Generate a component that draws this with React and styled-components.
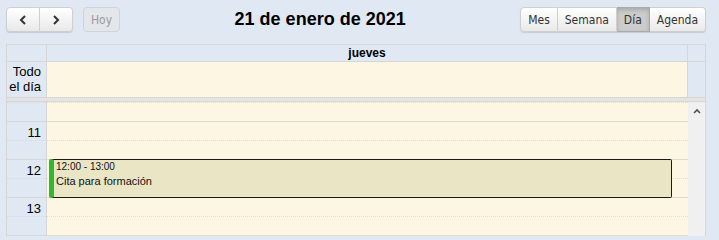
import React from 'react';
import styled, { createGlobalStyle } from 'styled-components';

const GlobalStyle = createGlobalStyle`
  html, body { margin: 0; padding: 0; background: #dfe8f3; }
  body { font-family: "Liberation Sans", Arial, sans-serif; color: #000; }
`;

const Page = styled.div`
  padding: 7px 13px 0 6px;
  height: 236px;
  box-sizing: border-box;
  overflow: hidden;
`;

const Toolbar = styled.div`
  display: flex;
  align-items: center;
  justify-content: space-between;
  height: 25px;
  margin-bottom: 12px;
`;

const Group = styled.div`
  display: flex;
  align-items: center;
  gap: ${p => p.$gap || 0}px;
`;

const ButtonSet = styled.div`
  display: flex;
  border-radius: 4px;
  box-shadow: 0 1px 1px rgba(0, 0, 0, 0.12);
`;

const Btn = styled.button`
  height: 25px;
  padding: 0 ${p => p.$pad || 7}px;
  margin: 0;
  font-family: "DejaVu Sans Condensed", "Liberation Sans", sans-serif;
  font-size: 12px;
  color: #333;
  border: 1px solid #cfcfcf;
  border-left-width: ${p => (p.$first ? 1 : 0)}px;
  background: linear-gradient(#ffffff, #e9e9e9);
  display: flex;
  align-items: center;
  justify-content: center;
  &:first-child { border-radius: 4px 0 0 4px; }
  &:last-child { border-radius: 0 4px 4px 0; }
  &.active {
    background: #cccccc;
    border-color: #aaaaaa;
    box-shadow: inset 0 2px 4px rgba(0, 0, 0, 0.18);
  }
`;

const Disabled = styled(Btn)`
  border-radius: 4px;
  border: 1px solid #d3d3d3;
  background: #e3e7ec;
  color: #9a9a9a;
  &:first-child, &:last-child { border-radius: 4px; }
`;

const Title = styled.h2`
  margin: 0;
  font-size: 18px;
  font-weight: bold;
  font-family: "Liberation Sans", Arial, sans-serif;
`;

const Table = styled.div`
  border: 1px solid #d6d6d6;
  border-bottom: none;
  width: 700px;
  box-sizing: border-box;
`;

const Row = styled.div`
  display: grid;
  grid-template-columns: 40px 1fr 17px;
  height: ${p => p.$h}px;
  border-bottom: 1px solid #d6d6d6;
`;

const Axis = styled.div`
  background: #dfe8f3;
  border-right: 1px solid #d6d6d6;
  text-align: right;
  padding: 2px 5px 0 0;
  font-size: 13px;
  line-height: 15px;
  box-sizing: border-box;
`;

const DayHead = styled.div`
  text-align: center;
  font-size: 12px;
  font-weight: bold;
  line-height: 16px;
  border-right: 1px solid #d6d6d6;
`;

const Cream = styled.div`
  background: #fdf6e3;
  border-right: 1px solid #d6d6d6;
`;

const Gutter = styled.div`
  background: #dfe8f3;
`;

const Divider = styled.div`
  height: 3px;
  background: #e4e4e4;
  border-bottom: 1px solid #d6d6d6;
`;

const Scroller = styled.div`
  display: grid;
  grid-template-columns: 40px 1fr 17px;
  height: 140px;
  overflow: hidden;
`;

const AxisCol = styled.div`
  background: #dfe8f3;
  border-right: 1px solid #d6d6d6;
`;

const DayCol = styled.div`
  position: relative;
  background: #fdf6e3;
`;

const Slot = styled.div`
  height: 19px;
  box-sizing: border-box;
  border-top: 1px ${p => (p.$half ? 'dotted #e2ddcd' : 'solid #dedbd2')};
  text-align: right;
  padding-right: 5px;
  font-size: 13px;
  line-height: 15px;
  padding-top: 3px;
`;

const AxisSlot = styled(Slot)`
  border-top-color: ${p => (p.$half ? '#d3dbe4' : '#d6d6d6')};
`;

const ScrollBar = styled.div`
  background: #f0f0f0;
  display: flex;
  justify-content: center;
  padding-top: 6px;
`;

const Event = styled.div`
  position: absolute;
  left: 2px;
  right: 16px;
  top: ${p => p.$top}px;
  height: ${p => p.$h}px;
  box-sizing: border-box;
  background: #e9e5c5;
  border: 1px solid #1a1a1a;
  border-left: 5px solid #2dbb2d;
  border-radius: 2px;
  padding: 1px 2px;
  font-family: "Liberation Sans", Arial, sans-serif;
  color: #111;
`;

const EventTime = styled.div`
  font-size: 10px;
  line-height: 12px;
`;

const EventTitle = styled.div`
  font-size: 11px;
  line-height: 14px;
  margin-top: 1px;
`;

const Chevron = ({ dir }) => (
  <svg width="10" height="12" viewBox="0 0 10 12">
    <polyline
      points={dir === 'left' ? '7,2 3,6 7,10' : '3,2 7,6 3,10'}
      fill="none"
      stroke="#333"
      strokeWidth="2"
    />
  </svg>
);

const slots = [
  { half: true, label: '' },
  { half: false, label: '11' },
  { half: true, label: '' },
  { half: false, label: '12' },
  { half: true, label: '' },
  { half: false, label: '13' },
  { half: true, label: '' },
  { half: false, label: '' },
];

export default function App() {
  return (
    <>
      <GlobalStyle />
      <Page>
        <Toolbar>
          <Group $gap={10}>
            <ButtonSet>
              <Btn $first $pad={11}><Chevron dir="left" /></Btn>
              <Btn $pad={11}><Chevron dir="right" /></Btn>
            </ButtonSet>
            <Disabled $first $pad={7}>Hoy</Disabled>
          </Group>
          <Title>21 de enero de 2021</Title>
          <ButtonSet>
            <Btn $first>Mes</Btn>
            <Btn>Semana</Btn>
            <Btn className="active">Día</Btn>
            <Btn>Agenda</Btn>
          </ButtonSet>
        </Toolbar>

        <Table>
          <Row $h={16}>
            <Axis />
            <DayHead>jueves</DayHead>
            <Gutter />
          </Row>
          <Row $h={35}>
            <Axis>Todo<br />el día</Axis>
            <Cream />
            <Gutter />
          </Row>
          <Divider />
          <Scroller>
            <AxisCol>
              {slots.map((s, i) => (
                <AxisSlot key={i} $half={s.half}>{s.label}</AxisSlot>
              ))}
            </AxisCol>
            <DayCol>
              {slots.map((s, i) => (
                <Slot key={i} $half={s.half} />
              ))}
              <Event $top={57} $h={39}>
                <EventTime>12:00 - 13:00</EventTime>
                <EventTitle>Cita para formación</EventTitle>
              </Event>
            </DayCol>
            <ScrollBar>
              <svg width="8" height="6" viewBox="0 0 8 6">
                <polyline points="1,5 4,2 7,5" fill="none" stroke="#505050" strokeWidth="1.6" />
              </svg>
            </ScrollBar>
          </Scroller>
        </Table>
      </Page>
    </>
  );
}
